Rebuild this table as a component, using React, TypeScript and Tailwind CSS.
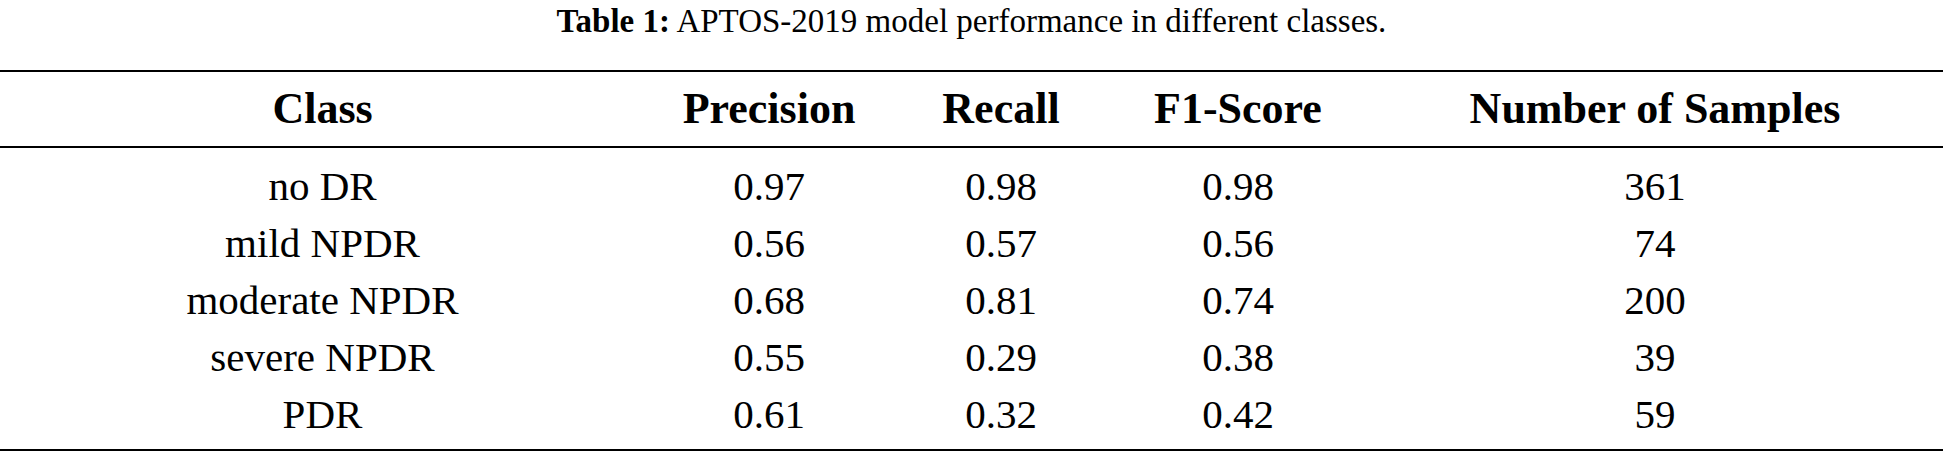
import React from "react";

interface Row {
  name: string;
  precision: string;
  recall: string;
  f1: string;
  samples: number;
}

const rows: Row[] = [
  { name: "no DR", precision: "0.97", recall: "0.98", f1: "0.98", samples: 361 },
  { name: "mild NPDR", precision: "0.56", recall: "0.57", f1: "0.56", samples: 74 },
  { name: "moderate NPDR", precision: "0.68", recall: "0.81", f1: "0.74", samples: 200 },
  { name: "severe NPDR", precision: "0.55", recall: "0.29", f1: "0.38", samples: 39 },
  { name: "PDR", precision: "0.61", recall: "0.32", f1: "0.42", samples: 59 },
];

// column widths chosen so each column's centre sits where the reference has it
const cols = "grid grid-cols-[645px_248px_216px_258px_1fr]";

const App: React.FC = () => {
  return (
    <div className="w-[1943px] h-[455px] bg-white text-black font-['Liberation_Serif',serif] text-[41px] overflow-hidden">
      <div className="h-[42px] leading-[42px] text-center text-[33px]">
        <span className="font-bold">Table 1:</span> APTOS-2019 model performance in different classes.
      </div>

      <div className="mt-[28px] border-t-2 border-b-2 border-black">
        <div className={`${cols} h-[74px] items-center font-bold text-center leading-none text-[44px]`}>
          <div>Class</div>
          <div>Precision</div>
          <div>Recall</div>
          <div>F1-Score</div>
          <div>Number of Samples</div>
        </div>
      </div>

      <div className="pt-[10px] pb-[6px] border-b-2 border-black">
        {rows.map((r) => (
          <div key={r.name} className={`${cols} h-[57px] items-center text-center leading-none`}>
            <div>{r.name}</div>
            <div>{r.precision}</div>
            <div>{r.recall}</div>
            <div>{r.f1}</div>
            <div>{r.samples}</div>
          </div>
        ))}
      </div>
    </div>
  );
};

export default App;
